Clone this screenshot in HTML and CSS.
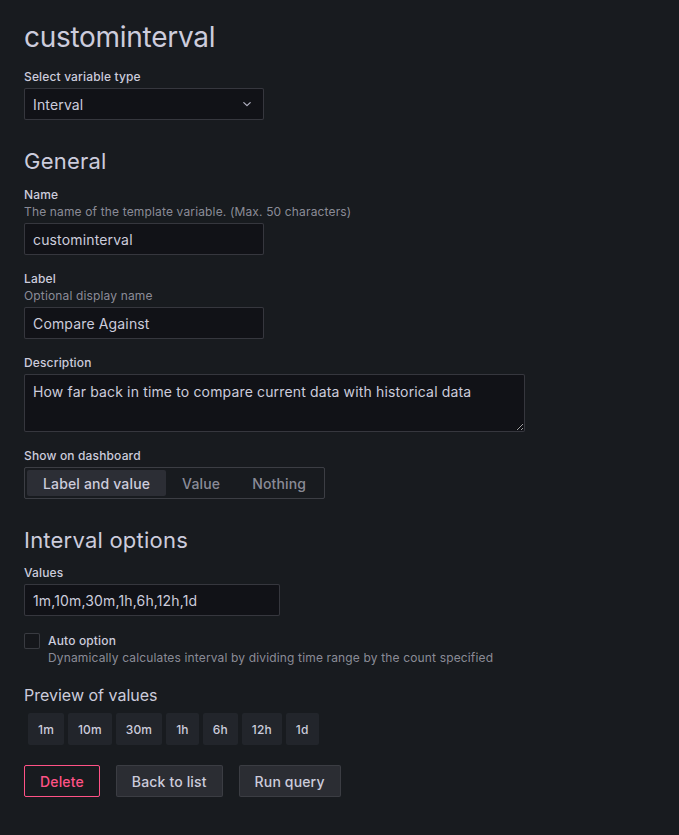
FILE: index.html
```html
<!DOCTYPE html>
<html lang="en">
<head>
<meta charset="utf-8">
<title>Edit variable</title>
<link rel="stylesheet" href="styles.css">
</head>
<body>
<main class="editor">
  <h1 class="title">custominterval</h1>

  <div class="field">
    <label class="field-label">Select variable type</label>
    <div class="select">
      <span>Interval</span>
      <svg class="chevron" width="10" height="10" viewBox="0 0 10 10"><path d="M1.8 3.6 L5 6.6 L8.2 3.6" fill="none" stroke="currentColor" stroke-width="1.3" stroke-linecap="round" stroke-linejoin="round"/></svg>
    </div>
  </div>

  <h2 class="section">General</h2>

  <div class="field">
    <label class="field-label with-desc">Name</label>
    <div class="field-desc">The name of the template variable. (Max. 50 characters)</div>
    <input class="input w240" type="text" value="custominterval">
  </div>

  <div class="field field-tight">
    <label class="field-label with-desc">Label</label>
    <div class="field-desc">Optional display name</div>
    <input class="input w240" type="text" value="Compare Against">
  </div>

  <div class="field field-tight">
    <label class="field-label">Description</label>
    <textarea class="textarea">How far back in time to compare current data with historical data</textarea>
  </div>

  <div class="field">
    <label class="field-label">Show on dashboard</label>
    <div class="radio-group">
      <span class="radio active">Label and value</span>
      <span class="radio">Value</span>
      <span class="radio">Nothing</span>
    </div>
  </div>

  <h2 class="section section-interval">Interval options</h2>

  <div class="field">
    <label class="field-label">Values</label>
    <input class="input w256" type="text" value="1m,10m,30m,1h,6h,12h,1d">
  </div>

  <div class="check-row">
    <span class="checkbox"></span>
    <div>
      <div class="check-label">Auto option</div>
      <div class="field-desc check-desc">Dynamically calculates interval by dividing time range by the count specified</div>
    </div>
  </div>

  <h3 class="preview-title">Preview of values</h3>
  <div class="chips">
    <span class="chip">1m</span>
    <span class="chip">10m</span>
    <span class="chip">30m</span>
    <span class="chip">1h</span>
    <span class="chip">6h</span>
    <span class="chip">12h</span>
    <span class="chip">1d</span>
  </div>

  <div class="actions">
    <button class="btn btn-danger" type="button">Delete</button>
    <button class="btn" type="button">Back to list</button>
    <button class="btn" type="button">Run query</button>
  </div>
</main>
</body>
</html>
```

FILE: styles.css
```css
* {
  box-sizing: border-box;
}

html, body {
  margin: 0;
  background: #181b1f;
}

body {
  font-family: Inter, "Noto Sans", sans-serif;
  color: #ccccdc;
  font-size: 14px;
  letter-spacing: 0.01071em;
  height: 835px;
}

.editor {
  padding: 20px 24px 0 24px;
}

.title {
  margin: 0 0 14px 0;
  font-size: 28px;
  line-height: 34px;
  font-weight: 400;
  letter-spacing: -0.01em;
  color: #ccccdc;
}

.field {
  margin-bottom: 16px;
}

.field-tight {
  margin-bottom: 15px;
}

.field-label {
  display: block;
  font-size: 12px;
  line-height: 18px;
  font-weight: 500;
  color: #ccccdc;
}

.field-label.with-desc {
  line-height: 16px;
}

.field-desc {
  font-size: 12px;
  line-height: 18px;
  color: rgba(204, 204, 220, 0.65);
}

.field-label + .select,
.field-label + .input,
.field-label + .textarea,
.field-label + .radio-group,
.field-desc + .input {
  margin-top: 2px;
}

.select,
.input,
.textarea {
  display: block;
  background: #111217;
  border: 1px solid rgba(204, 204, 220, 0.2);
  border-radius: 2px;
  color: #ccccdc;
  font-family: inherit;
  font-size: 14px;
  letter-spacing: inherit;
}

.select {
  width: 240px;
  height: 32px;
  padding: 0 8px;
  display: flex;
  align-items: center;
  justify-content: space-between;
}

.chevron {
  color: #b0b0c0;
  margin-right: 3px;
}

.input {
  height: 32px;
  padding: 0 8px;
  outline: none;
}

.w240 { width: 240px; }
.w256 { width: 256px; }

.textarea {
  width: 501px;
  height: 58px;
  padding: 6px 8px;
  line-height: 21px;
  resize: vertical;
  outline: none;
}

.section {
  margin: 29px 0 13px 0;
  font-size: 22px;
  line-height: 25px;
  font-weight: 400;
  letter-spacing: 0.01em;
  color: #ccccdc;
}

.section-interval {
  margin-bottom: 11px;
}

.radio-group {
  display: inline-flex;
  height: 32px;
  padding: 2px;
  border: 1px solid rgba(204, 204, 220, 0.2);
  border-radius: 2px;
}

.radio {
  display: flex;
  align-items: center;
  padding: 0 16px;
  font-size: 14px;
  font-weight: 500;
  color: rgba(204, 204, 220, 0.65);
  border-radius: 2px;
}

.radio.active {
  background: #2c2e35;
  color: #ccccdc;
}

.check-row {
  display: flex;
  align-items: flex-start;
  gap: 8px;
  margin-top: 16px;
}

.checkbox {
  width: 16px;
  height: 16px;
  margin-top: 1px;
  background: #15171b;
  border: 1px solid rgba(204, 204, 220, 0.2);
  border-radius: 2px;
  flex: none;
}

.check-label {
  font-size: 12px;
  line-height: 17px;
  font-weight: 500;
}

.check-desc {
  line-height: 18px;
}

.preview-title {
  margin: 18px 0 8px 0;
  font-size: 16px;
  line-height: 20px;
  font-weight: 400;
  letter-spacing: 0;
  color: #ccccdc;
}

.chips {
  display: flex;
  gap: 4px;
  padding-left: 4px;
}

.chip {
  height: 32px;
  display: flex;
  align-items: center;
  padding: 0 10px;
  background: #22252b;
  border-radius: 2px;
  font-size: 12px;
  font-weight: 500;
  color: #ccccdc;
}

.actions {
  display: flex;
  gap: 16px;
  margin-top: 20px;
}

.btn {
  height: 32px;
  padding: 0 15px;
  font-family: inherit;
  font-size: 14px;
  font-weight: 500;
  letter-spacing: inherit;
  color: #ccccdc;
  background: #2b2d33;
  border: 1px solid rgba(204, 204, 220, 0.1);
  border-radius: 2px;
}

.btn-danger {
  background: transparent;
  color: #ff5286;
  border-color: #ff5286;
}
```
